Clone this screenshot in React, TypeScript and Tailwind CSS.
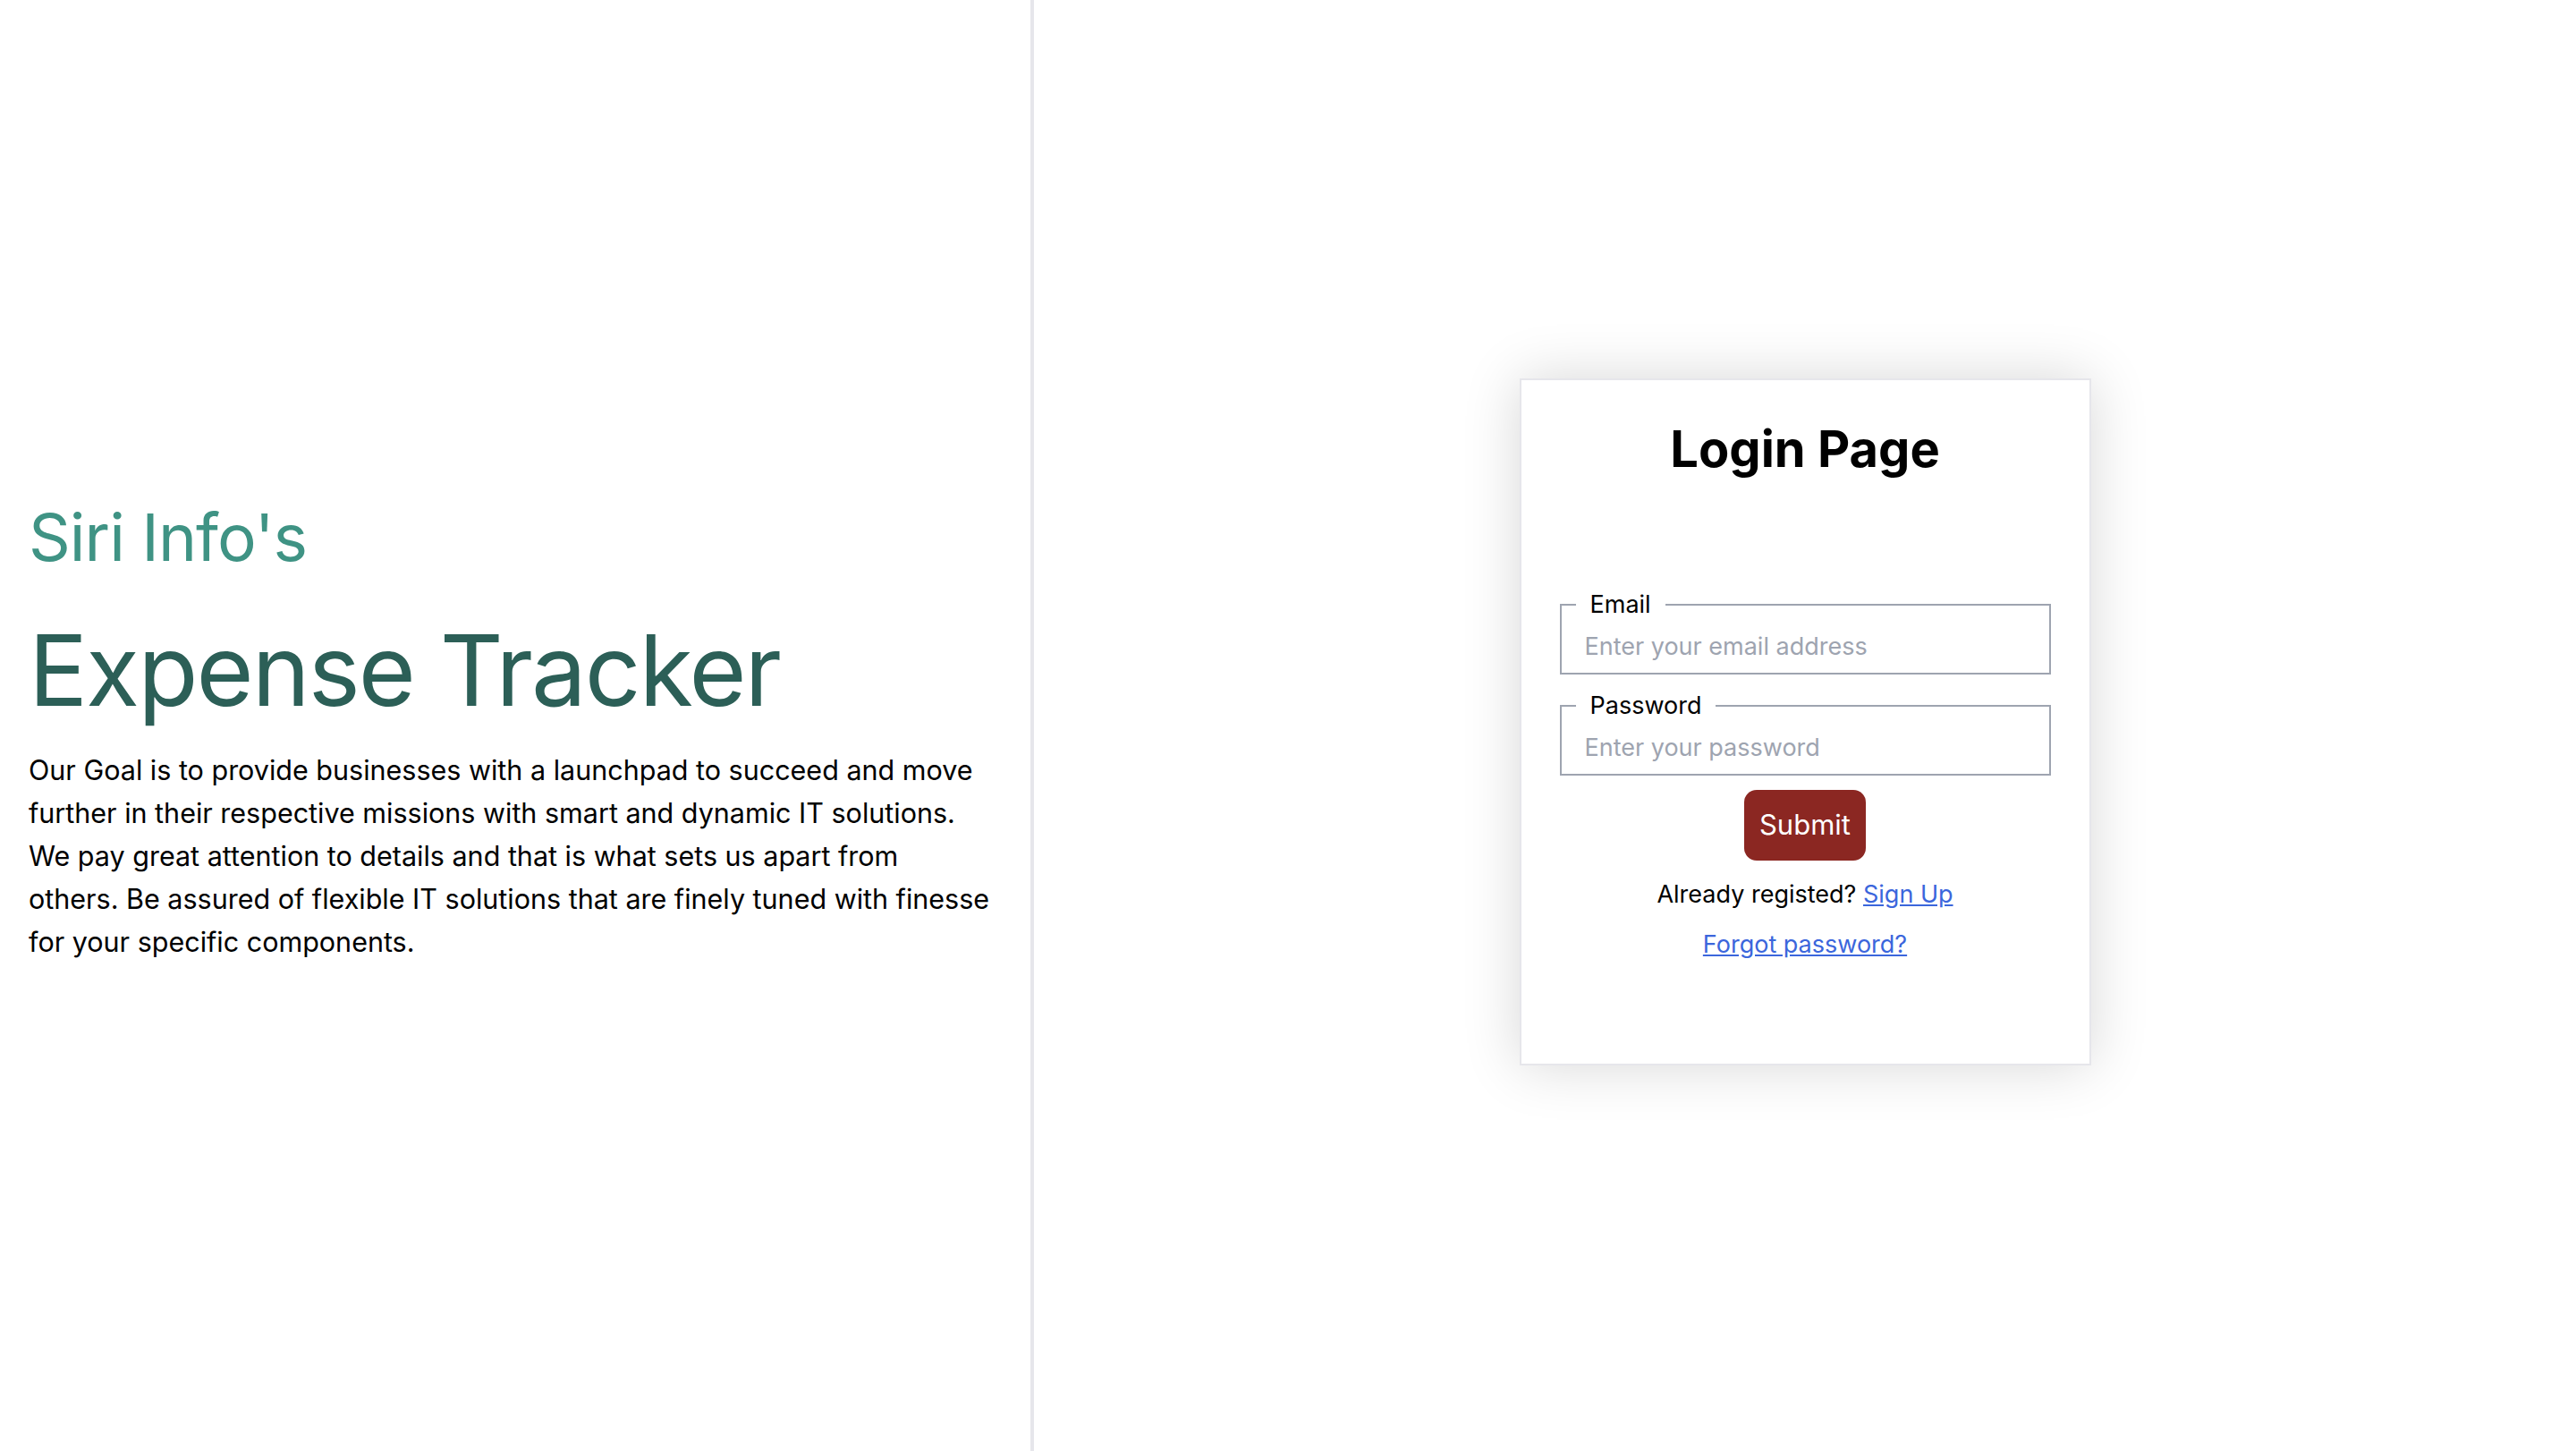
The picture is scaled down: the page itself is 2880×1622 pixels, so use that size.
export default function App() {
  return (
    <div className="flex h-screen w-full bg-white font-['Inter',sans-serif] text-black">
      <div className="flex w-[1156px] shrink-0 flex-col justify-center border-r-4 border-[#e6e6eb] pt-[12px] pl-[32px] pr-[16px]">
        <h2 className="text-[73px] leading-[1.2] font-normal tracking-[-1px] text-[#3f9384]">Siri Info's</h2>
        <h1 className="mt-[38px] text-[110px] leading-[1.2] font-normal tracking-[-2px] text-[#2c5f57]">Expense Tracker</h1>
        <p className="mt-[22px] text-[30.5px] leading-[48px] text-black">
          Our Goal is to provide businesses with a launchpad to succeed and move<br />
          further in their respective missions with smart and dynamic IT solutions.<br />
          We pay great attention to details and that is what sets us apart from<br />
          others. Be assured of flexible IT solutions that are finely tuned with finesse<br />
          for your specific components.
        </p>
      </div>

      <div className="flex flex-1 items-center justify-center">
        <div className="mb-[8px] box-border flex h-[768px] w-[639px] flex-col items-center border-2 border-[#e6e6eb] bg-white px-[43px] pt-[44px] shadow-[0_0_60px_rgba(0,0,0,0.16)]">
          <h1 className="text-[56px] leading-[1.2] font-bold text-black">Login Page</h1>

          <form className="mt-[123px] flex w-full flex-col items-center" onSubmit={(e) => e.preventDefault()}>
            <fieldset className="w-full border-2 border-[#9ea4b0] pl-[16px] pr-[16px] pb-[9px]">
              <legend className="px-[16px] text-[27px] leading-[34px] text-black">Email</legend>
              <input
                type="email"
                placeholder="Enter your email address"
                className="w-full px-[10px] pt-[10px] text-[27px] leading-[40px] outline-none placeholder:text-[#9ea4b0]"
              />
            </fieldset>
            <fieldset className="mt-[18px] w-full border-2 border-[#9ea4b0] pl-[16px] pr-[16px] pb-[9px]">
              <legend className="px-[16px] text-[27px] leading-[34px] text-black">Password</legend>
              <input
                type="password"
                placeholder="Enter your password"
                className="w-full px-[10px] pt-[10px] text-[27px] leading-[40px] outline-none placeholder:text-[#9ea4b0]"
              />
            </fieldset>

            <button type="submit" className="mt-[16px] h-[79px] rounded-[14px] bg-[#8b2722] px-[17px] text-[31px] text-white">
              Submit
            </button>

            <p className="mt-[18px] text-[27px] leading-[40px] text-black">
              Already registed?{' '}
              <a href="#" className="text-[#3b66dc] underline">Sign Up</a>
            </p>
            <a href="#" className="mt-[16px] text-[27px] leading-[40px] text-[#3b66dc] underline">Forgot password?</a>
          </form>
        </div>
      </div>
    </div>
  )
}
